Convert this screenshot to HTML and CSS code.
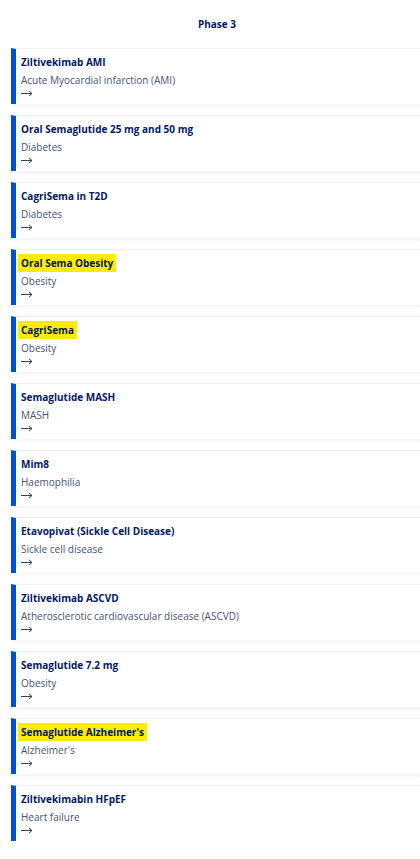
FILE: index.html
```html
<!DOCTYPE html>
<html lang="en">
<head>
  <meta charset="UTF-8" />
  <meta name="viewport" content="width=device-width, initial-scale=1" />
  <title>Pipeline - Phase 3</title>
  <link rel="stylesheet" href="styles.css">
</head>
<body>

  <div class="pipeline">
    <h2>Phase 3</h2>

    <div class="card">
      <div class="title">Ziltivekimab AMI</div>
      <div class="area">Acute Myocardial infarction (AMI)</div>
      <div class="arrow"><svg width="12" height="7" viewBox="0 0 12 7"><path d="M0 3.5H11M8 1l3 2.5L8 6" fill="none" stroke="currentColor" stroke-width="1"/></svg></div>
    </div>

    <div class="card">
      <div class="title">Oral Semaglutide 25 mg and 50 mg</div>
      <div class="area">Diabetes</div>
      <div class="arrow"><svg width="12" height="7" viewBox="0 0 12 7"><path d="M0 3.5H11M8 1l3 2.5L8 6" fill="none" stroke="currentColor" stroke-width="1"/></svg></div>
    </div>

    <div class="card">
      <div class="title">CagriSema in T2D</div>
      <div class="area">Diabetes</div>
      <div class="arrow"><svg width="12" height="7" viewBox="0 0 12 7"><path d="M0 3.5H11M8 1l3 2.5L8 6" fill="none" stroke="currentColor" stroke-width="1"/></svg></div>
    </div>

    <div class="card">
      <div class="title"><span class="mark">Oral Sema Obesity</span></div>
      <div class="area">Obesity</div>
      <div class="arrow"><svg width="12" height="7" viewBox="0 0 12 7"><path d="M0 3.5H11M8 1l3 2.5L8 6" fill="none" stroke="currentColor" stroke-width="1"/></svg></div>
    </div>

    <div class="card">
      <div class="title"><span class="mark">CagriSema</span></div>
      <div class="area">Obesity</div>
      <div class="arrow"><svg width="12" height="7" viewBox="0 0 12 7"><path d="M0 3.5H11M8 1l3 2.5L8 6" fill="none" stroke="currentColor" stroke-width="1"/></svg></div>
    </div>

    <div class="card">
      <div class="title">Semaglutide MASH</div>
      <div class="area">MASH</div>
      <div class="arrow"><svg width="12" height="7" viewBox="0 0 12 7"><path d="M0 3.5H11M8 1l3 2.5L8 6" fill="none" stroke="currentColor" stroke-width="1"/></svg></div>
    </div>

    <div class="card">
      <div class="title">Mim8</div>
      <div class="area">Haemophilia</div>
      <div class="arrow"><svg width="12" height="7" viewBox="0 0 12 7"><path d="M0 3.5H11M8 1l3 2.5L8 6" fill="none" stroke="currentColor" stroke-width="1"/></svg></div>
    </div>

    <div class="card">
      <div class="title">Etavopivat (Sickle Cell Disease)</div>
      <div class="area">Sickle cell disease</div>
      <div class="arrow"><svg width="12" height="7" viewBox="0 0 12 7"><path d="M0 3.5H11M8 1l3 2.5L8 6" fill="none" stroke="currentColor" stroke-width="1"/></svg></div>
    </div>

    <div class="card">
      <div class="title">Ziltivekimab ASCVD</div>
      <div class="area">Atherosclerotic cardiovascular disease (ASCVD)</div>
      <div class="arrow"><svg width="12" height="7" viewBox="0 0 12 7"><path d="M0 3.5H11M8 1l3 2.5L8 6" fill="none" stroke="currentColor" stroke-width="1"/></svg></div>
    </div>

    <div class="card">
      <div class="title">Semaglutide 7.2 mg</div>
      <div class="area">Obesity</div>
      <div class="arrow"><svg width="12" height="7" viewBox="0 0 12 7"><path d="M0 3.5H11M8 1l3 2.5L8 6" fill="none" stroke="currentColor" stroke-width="1"/></svg></div>
    </div>

    <div class="card">
      <div class="title"><span class="mark">Semaglutide Alzheimer's</span></div>
      <div class="area">Alzheimer's</div>
      <div class="arrow"><svg width="12" height="7" viewBox="0 0 12 7"><path d="M0 3.5H11M8 1l3 2.5L8 6" fill="none" stroke="currentColor" stroke-width="1"/></svg></div>
    </div>

    <div class="card">
      <div class="title">Ziltivekimabin HFpEF</div>
      <div class="area">Heart failure</div>
      <div class="arrow"><svg width="12" height="7" viewBox="0 0 12 7"><path d="M0 3.5H11M8 1l3 2.5L8 6" fill="none" stroke="currentColor" stroke-width="1"/></svg></div>
    </div>
  </div>

</body>
</html>
```

FILE: styles.css
```css
* { margin:0; padding:0; box-sizing:border-box; font-family:'Open Sans','Noto Sans',Arial,sans-serif; }
html, body { overflow:hidden; }
body { background:#fff; color:#001965; }
.pipeline { width:412px; margin-left:11px; padding-top:16px; display:flex; flex-direction:column; gap:11px; }
h2 { font-size:10px; font-weight:700; text-align:center; line-height:16px; margin-bottom:5px; color:#001965; }
.card { background:#fff; border-top:1px solid #f0f0f0; border-left:5px solid #0052cc; padding:6px 5px 5px 5px; box-shadow:0 2px 4px rgba(0,0,0,0.06); }
.title { font-size:10px; font-weight:700; line-height:15px; margin-bottom:3px; color:#001965; }
.mark { background:#ffec00; padding:2px 3px; margin-left:-3px; }
.area { font-size:10px; line-height:15px; color:#465373; }
.arrow { height:11px; display:flex; align-items:center; color:#3a4460; }
.arrow svg { display:block; }
```
